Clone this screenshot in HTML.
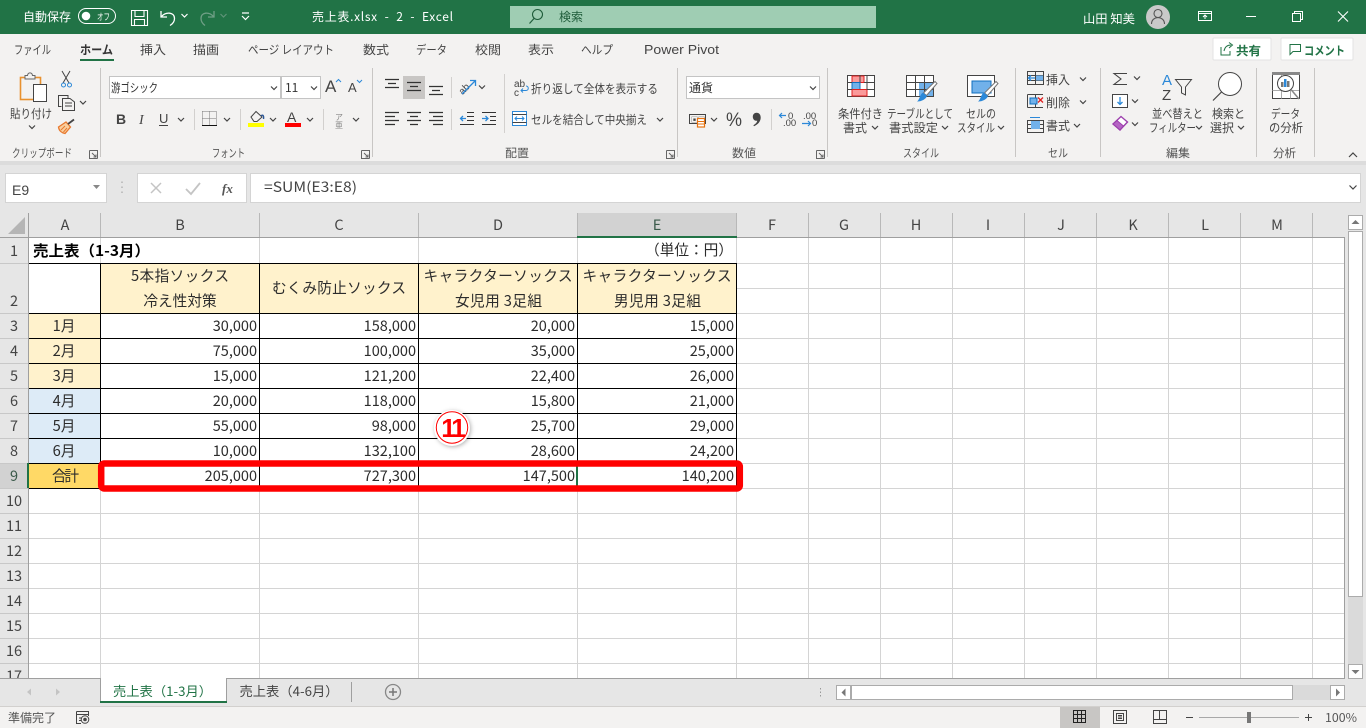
<!DOCTYPE html>
<html lang="ja"><head><meta charset="utf-8"><title>売上表.xlsx - Excel</title>
<style>
html,body{margin:0;padding:0;background:#e6e6e6;overflow:hidden}
svg{display:block;font-family:"Liberation Sans","Noto Sans CJK JP",sans-serif;text-spacing-trim:space-all}
.j{font-family:"Noto Sans CJK JP",sans-serif}
.u{font-family:"Noto Sans CJK JP",sans-serif;font-size:12px;fill:#444}
.w{font-family:"Noto Sans CJK JP",sans-serif;font-size:12px;fill:#fff}
.c{font-family:"Noto Sans CJK JP",sans-serif;font-size:14.67px;fill:#2c2c2c}
.n{font-family:"Noto Sans CJK JP",sans-serif;font-size:14.5px;fill:#2c2c2c;text-anchor:end}
.m{text-anchor:middle}
.h{font-family:"Noto Sans CJK JP",sans-serif;font-size:14.5px;fill:#444;text-anchor:middle}
.s{fill:none;stroke:#444;stroke-width:1}
.l{fill:none;stroke:#333;stroke-width:1.3}
</style></head><body>
<svg width="1366" height="728" viewBox="0 0 1366 728" xmlns="http://www.w3.org/2000/svg">
<defs><path id="ch" d="M-3-1.5L0 1.5 3-1.5" fill="none" stroke="#444" stroke-width="1.2"/>
<path id="launch" d="M.5.5H8.5V8.5M.5.5V8.5H8.5M3 3L7 7M7 4.5V7H4.5" fill="none" stroke="#666" stroke-width="1"/></defs>

<!-- backgrounds -->
<rect width="1366" height="728" fill="#e6e6e6"/>
<rect width="1366" height="34" fill="#217346"/>
<rect y="34" width="1366" height="127" fill="#f3f2f1"/>
<rect y="161" width="1366" height="4" fill="#dcdcdc"/>

<!-- title bar -->
<text class="w" x="23" y="21" textLength="48" lengthAdjust="spacingAndGlyphs">自動保存</text>
<rect x="78.5" y="8.5" width="37" height="15" rx="7.5" fill="none" stroke="#fff"/>
<circle cx="86" cy="16" r="4.3" fill="#fff"/>
<text class="w" x="97" y="20" style="font-size:9px" textLength="13" lengthAdjust="spacingAndGlyphs">オフ</text>
<path d="M131.5 10.5H147.5V25.5H131.5ZM135 10.5V16.5H144V10.5M134.5 25.5V19.5H144.5V25.5" fill="none" stroke="#fff" stroke-width="1.1"/>
<path d="M161 11V17H167M161.5 16.5C166 11.5 174.5 12 174.5 18.5C174.5 21.5 172.5 24 170 25.5" fill="none" stroke="#fff" stroke-width="1.3"/>
<path d="M181.5 14L184.5 17 187.5 14" fill="none" stroke="#fff" stroke-width="1.2"/>
<path d="M214 11V17H208M213.5 16.5C209 11.5 201 12 201 18.5C201 21.5 203 24 205 25.5" fill="none" stroke="#6f9f86" stroke-width="1.3"/>
<path d="M220.5 14L223.5 17 226.5 14" fill="none" stroke="#5f9378" stroke-width="1.2"/>
<path d="M242 13H249M242 16L245.5 19.5 249 16" fill="none" stroke="#fff" stroke-width="1.2"/>
<text class="w" x="312" y="21" textLength="141" lengthAdjust="spacing">売上表.xlsx&#160;&#160;-&#160;&#160;2&#160;&#160;-&#160;&#160;Excel</text>
<rect x="510" y="6" width="366" height="22" fill="#9fcdb3"/>
<circle cx="537.5" cy="14.5" r="5" fill="none" stroke="#1f5c3a" stroke-width="1.1"/>
<path d="M534 18.5L529.5 23.5" stroke="#1f5c3a" stroke-width="1.2"/>
<text class="u" x="559" y="21" style="fill:#1f5c3a" textLength="24" lengthAdjust="spacingAndGlyphs">検索</text>
<text class="w" x="1083" y="23" textLength="52" lengthAdjust="spacingAndGlyphs">山田 知美</text>
<circle cx="1158" cy="17" r="12" fill="#c9c9c9"/>
<circle cx="1158" cy="13.5" r="4" fill="none" stroke="#555" stroke-width="1.1"/>
<path d="M1151.5 24C1151.5 15.5 1164.500 15.500 1164.500 24" fill="none" stroke="#555" stroke-width="1.1"/>
<path d="M1198.500 11.500H1211.500V20.500H1198.500ZM1198.500 13.500H1211.500M1205 19V15M1203 17L1205 15 1207 17" fill="none" stroke="#fff"/>
<path d="M1246 16.500H1256" stroke="#fff" stroke-width="1"/>
<path d="M1292.500 13.500H1300.500V21.500H1292.500ZM1294.500 13V11.500H1302.500V19.500H1301" fill="none" stroke="#fff"/>
<path d="M1338 11.500L1348 21.500M1348 11.500L1338 21.500" stroke="#fff" stroke-width="1.1"/>

<!-- tabs -->
<g class="u">
<text class="u" x="14" y="54" textLength="37" lengthAdjust="spacingAndGlyphs">ファイル</text>
<text class="u" x="80" y="54" textLength="33" lengthAdjust="spacingAndGlyphs" style="font-weight:700;fill:#333">ホーム</text>
<text class="u" x="140" y="54" textLength="26" lengthAdjust="spacingAndGlyphs">挿入</text>
<text class="u" x="193" y="54" textLength="26" lengthAdjust="spacingAndGlyphs">描画</text>
<text class="u" x="248" y="54" textLength="86" lengthAdjust="spacingAndGlyphs">ページ レイアウト</text>
<text class="u" x="363" y="54" textLength="26" lengthAdjust="spacingAndGlyphs">数式</text>
<text class="u" x="416" y="54" textLength="31" lengthAdjust="spacingAndGlyphs">データ</text>
<text class="u" x="475" y="54" textLength="26" lengthAdjust="spacingAndGlyphs">校閲</text>
<text class="u" x="528" y="54" textLength="26" lengthAdjust="spacingAndGlyphs">表示</text>
<text class="u" x="581" y="54" textLength="32" lengthAdjust="spacingAndGlyphs">ヘルプ</text>
<text class="u" x="644" y="54" textLength="75" lengthAdjust="spacingAndGlyphs" style="font-family:'Liberation Sans',sans-serif;font-size:13px">Power Pivot</text>
</g>
<rect x="80" y="59" width="34" height="2" fill="#217346"/>
<rect x="1213" y="38" width="58" height="22" rx="1" fill="#fff" stroke="#e3e3e3"/>
<rect x="1281" y="38" width="72" height="22" rx="1" fill="#fff" stroke="#e3e3e3"/>
<path d="M1221 47V55H1230V51M1224 51C1225 46 1228 45 1231 45M1229 42.500L1232.500 45 1229 48" fill="none" stroke="#217346"/>
<text class="u" x="1236" y="55" style="font-weight:700;fill:#217346" textLength="25" lengthAdjust="spacingAndGlyphs">共有</text>
<path d="M1289.500 44.500H1300.500V51.500H1293L1290 54.500V44.500Z" fill="none" stroke="#217346"/>
<text class="u" x="1304" y="55" style="font-weight:700;fill:#217346" textLength="41" lengthAdjust="spacingAndGlyphs">コメント</text>

<!-- ribbon separators -->
<path d="M100.500 68V157M372.500 68V157M677.500 68V157M827.500 68V157M1015.500 68V157M1100.500 68V157M1256.500 68V157M1314.500 68V157" stroke="#c8c6c4"/>
<path d="M194.500 109V130M240.500 109V130M323.500 109V130M451.500 77V98M451.500 109V130M504.500 74V133M771.500 109V130" stroke="#d2d0ce"/>

<!-- group labels -->
<g>
<text class="u" x="12" y="157" textLength="60" lengthAdjust="spacingAndGlyphs" style="font-size:11.500px;fill:#555">クリップボード</text>
<text class="u" x="212" y="157" textLength="33" lengthAdjust="spacingAndGlyphs" style="font-size:11.500px;fill:#555">フォント</text>
<text class="u" x="505" y="157" textLength="24" lengthAdjust="spacingAndGlyphs" style="font-size:11.500px;fill:#555">配置</text>
<text class="u" x="732" y="157" textLength="24" lengthAdjust="spacingAndGlyphs" style="font-size:11.500px;fill:#555">数値</text>
<text class="u" x="903" y="157" textLength="36" lengthAdjust="spacingAndGlyphs" style="font-size:11.500px;fill:#555">スタイル</text>
<text class="u" x="1048" y="157" textLength="20" lengthAdjust="spacingAndGlyphs" style="font-size:11.500px;fill:#555">セル</text>
<text class="u" x="1166" y="157" textLength="24" lengthAdjust="spacingAndGlyphs" style="font-size:11.500px;fill:#555">編集</text>
<text class="u" x="1273" y="157" textLength="23" lengthAdjust="spacingAndGlyphs" style="font-size:11.500px;fill:#555">分析</text>
</g>
<use href="#launch" x="89" y="150"/><use href="#launch" x="361" y="150"/><use href="#launch" x="666" y="150"/><use href="#launch" x="816" y="150"/>
<path d="M1349 157L1353 153 1357 157" fill="none" stroke="#444" stroke-width="1.2"/>

<!-- clipboard -->
<rect x="20.500" y="77.500" width="20" height="22" fill="none" stroke="#e8912f" stroke-width="1.6"/>
<path d="M25 77.500V75.500H27.500C28 72 32 72 32.500 75.500H35V79H25Z" fill="#f3f2f1" stroke="#666"/>
<rect x="33.500" y="84.500" width="13" height="17" fill="#fff" stroke="#444"/>
<text class="u" x="10" y="118" textLength="42" lengthAdjust="spacingAndGlyphs">貼り付け</text>
<use href="#ch" x="32" y="127"/>
<path d="M62 71L69 83M70 71L63 83" stroke="#444"/>
<circle cx="63.500" cy="85" r="2" fill="none" stroke="#2b88d8"/><circle cx="69.500" cy="85" r="2" fill="none" stroke="#2b88d8"/>
<path d="M61.500 106.500H58.500V95.500H68V98M62.500 98.500H70L74.500 102V110.500H62.500ZM65 103H72M65 106H72" fill="none" stroke="#444"/>
<use href="#ch" x="83" y="102.500"/>
<path d="M58.500 127L66 122 70.500 127 65 133.500C62 133 59 131 58.500 127Z" fill="#f9cf9e" stroke="#e8792f" stroke-width="1.300"/>
<path d="M61 130L65 126M63.500 132L67 128" stroke="#e8792f"/>
<path d="M68 124L74 119.500" stroke="#444" stroke-width="1.800"/>

<!-- font -->
<rect x="109.500" y="76.500" width="171" height="22" fill="#fff" stroke="#c4c4c4"/>
<rect x="281.500" y="76.500" width="39" height="22" fill="#fff" stroke="#c4c4c4"/>
<text class="u" x="111" y="92" textLength="47" lengthAdjust="spacingAndGlyphs" style="fill:#333">游ゴシック</text>
<text class="u" x="285" y="92" style="fill:#333">11</text>
<use href="#ch" x="274" y="88"/><use href="#ch" x="314" y="88"/>
<text x="325" y="92" style="font-size:17px;fill:#444">A</text><path d="M336 82L338.500 79.500 341 82" fill="none" stroke="#2b88d8"/>
<text x="348" y="92" style="font-size:13px;fill:#444">A</text><path d="M357 80L359.500 82.500 362 80" fill="none" stroke="#2b88d8"/>
<text x="116" y="124" style="font-size:14px;font-weight:700;fill:#444">B</text>
<text x="139" y="124" style="font-size:14px;font-style:italic;fill:#444;font-family:'Liberation Serif',serif">I</text>
<text x="159" y="123" style="font-size:13px;fill:#444">U</text><path d="M159 125.500H168" stroke="#444"/>
<use href="#ch" x="181" y="119.500"/>
<path d="M202.500 111.500H216.500V125.500H202.500M202.500 111.500V125.500M209.500 111.500V125.500M202.500 118.500H216.500" fill="none" stroke="#777" stroke-dasharray="1 1"/>
<path d="M202 125.500H217" stroke="#111"/>
<use href="#ch" x="227" y="119.500"/>
<path d="M251 117L256 111.500 262 117 257 121.500H254Z" fill="none" stroke="#444"/><path d="M261 116C263 114 264 116 263.500 119" fill="none" stroke="#2b5797" stroke-width="1.400"/>
<rect x="248" y="123" width="16" height="4" fill="#ffff00"/>
<use href="#ch" x="273" y="119.500"/>
<text x="287" y="122" style="font-size:14px;fill:#444">A</text>
<rect x="285" y="123" width="16" height="4" fill="#f00"/>
<use href="#ch" x="310" y="119.500"/>
<text class="j" x="335" y="120" style="font-size:8px;fill:#888">ア</text><text class="j" x="335" y="128" style="font-size:8px;fill:#888">亜</text>
<use href="#ch" x="356" y="119.500"/>

<!-- alignment -->
<rect x="403" y="76" width="22" height="23" fill="#c8c6c4"/>
<path d="M385 79.500H399M388 83.500H396M385 87.500H399M407 82.500H421M410 86.500H418M407 90.500H421M429 86.500H443M432 90.500H440M429 94.500H443" class="l"/>
<path d="M385 112.500H399M385 116.500H395M385 120.500H399M385 124.500H395M407 112.500H421M410 116.500H418M407 120.500H421M410 124.500H418M429 112.500H443M433 116.500H443M429 120.500H443M433 124.500H443" class="l"/>
<g transform="rotate(-45 466 86)"><text x="457" y="90" style="font-size:10px;fill:#444">ab</text></g>
<path d="M462 94L475 81M470 80.500H475.500V86" fill="none" stroke="#2b88d8" stroke-width="1.300"/>
<use href="#ch" x="482" y="87"/>
<path d="M467 112.500H474M467 116.500H474M467 120.500H474M460 124.500H474M482 112.500H496M490 116.500H496M490 120.500H496M482 124.500H496" class="l" style="stroke-width:1"/>
<path d="M466 118.500H460.500M463 116L460.500 118.500 463 121M482 118.500H488M485.500 116L488 118.500 485.500 121" fill="none" stroke="#2b88d8" stroke-width="1.300"/>
<text x="514" y="87" style="font-size:10px;fill:#444">ab</text><text x="514" y="96" style="font-size:10px;fill:#444">c</text>
<path d="M521 90.500H526C529 90.500 529 86 526 86M523 88.500L521 90.500 523 92.500" fill="none" stroke="#2b88d8"/>
<text class="u" x="531" y="93" textLength="127" lengthAdjust="spacingAndGlyphs">折り返して全体を表示する</text>
<rect x="512.500" y="111.500" width="14" height="14" fill="#fff" stroke="#2b88d8"/><path d="M512.500 114.500H526.500M512.500 122.500H526.500" stroke="#444"/><path d="M515 118.500H524M517 116.500L515 118.500 517 120.500M522 116.500L524 118.500 522 120.500" fill="none" stroke="#2b88d8"/>
<text class="u" x="531" y="124" textLength="116" lengthAdjust="spacingAndGlyphs">セルを結合して中央揃え</text>
<use href="#ch" x="660" y="119.500"/>

<!-- number -->
<rect x="686.500" y="76.500" width="133" height="22" fill="#fff" stroke="#c4c4c4"/>
<text class="u" x="689" y="92" textLength="24" lengthAdjust="spacingAndGlyphs" style="fill:#333">通貨</text>
<use href="#ch" x="813" y="88"/>
<path d="M689.500 114.500H705.500V123.500H689.500Z" fill="none" stroke="#444"/><text x="691" y="122" style="font-size:7px;fill:#444">▣▣</text>
<rect x="697.500" y="118.500" width="7" height="8.500" fill="#fff" stroke="#e8730f" stroke-width="1.200"/><path d="M697.500 121.500H704.500M697.500 124H704.500" stroke="#e8730f"/>
<use href="#ch" x="714" y="119.500"/>
<text x="726" y="126" style="font-size:19px;fill:#444" textLength="16" lengthAdjust="spacingAndGlyphs">%</text>
<path d="M756.500 112.700C759.500 112.700 760.700 115 760.700 117.500C760.700 121.500 758 124.500 754 126.200L753.400 125.200C755.500 124 757 122.500 757.300 120.700C755 121.200 752.800 119.500 752.800 116.700C752.800 114.300 754.500 112.700 756.500 112.700Z" fill="#444"/>
<text x="788" y="119" style="font-size:9.500px;fill:#444">0</text><text x="783" y="126" style="font-size:9.500px;fill:#444">.00</text>
<path d="M786 115.500H779.500M782 113L779.500 115.500 782 118" fill="none" stroke="#2b88d8" stroke-width="1.200"/>
<text x="803" y="119" style="font-size:9.500px;fill:#444">.00</text><text x="812" y="126" style="font-size:9.500px;fill:#444">0</text>
<path d="M802 123.500H810.500M808 121L810.500 123.500 808 126" fill="none" stroke="#2b88d8" stroke-width="1.200"/>

<!-- styles -->
<rect x="847.500" y="75.500" width="27" height="21" fill="#fff" stroke="#444"/>
<rect x="852" y="76" width="12" height="6.500" fill="#fa9a9a" stroke="#e02020"/>
<rect x="852" y="82.500" width="8" height="7" fill="#71b1ea" stroke="#106ebe"/>
<rect x="852" y="89.500" width="15" height="6.500" fill="#fa9a9a" stroke="#e02020"/>
<path d="M847.500 82.500H852M864 82.500H874.500M847.500 89.500H852M867 89.500H874.500M860 75.500V82M867 75.500V82M867 82.500V89.500" stroke="#444"/>
<text class="u" x="838" y="118" textLength="45" lengthAdjust="spacingAndGlyphs">条件付き</text>
<text class="u" x="843" y="132" textLength="24" lengthAdjust="spacingAndGlyphs">書式</text><use href="#ch" x="875" y="127.500"/>
<rect x="906.500" y="75.500" width="27" height="21" fill="#fff" stroke="#444"/><rect x="919" y="82" width="14" height="14" fill="#71b1ea"/>
<path d="M906.500 82.500H933.500M906.500 89.500H933.500M915.500 75.500V96.500M924.500 75.500V96.500" stroke="#444"/>
<path d="M935 81.500L937 83.500 926.500 95.500 923.500 93Z" fill="#fff" stroke="#777"/><path d="M923 92.500L927 96C926 99 922 101.500 917 101.500C920 99.500 919.500 94.500 923 92.500Z" fill="#2b88d8"/>
<text class="u" x="887" y="118" textLength="66" lengthAdjust="spacingAndGlyphs">テーブルとして</text>
<text class="u" x="889" y="132" textLength="49" lengthAdjust="spacingAndGlyphs">書式設定</text><use href="#ch" x="945" y="127.500"/>
<rect x="967.500" y="75.500" width="27" height="21" fill="#fff" stroke="#444"/><rect x="972" y="81" width="19" height="12" fill="#71b1ea" stroke="#106ebe"/>
<path d="M996 81.500L998 83.500 987.500 95.500 984.500 93Z" fill="#fff" stroke="#777"/><path d="M984 92.500L988 96C987 99 983 101.500 978 101.500C981 99.500 980.500 94.500 984 92.500Z" fill="#2b88d8"/>
<text class="u" x="966" y="118" textLength="30" lengthAdjust="spacingAndGlyphs">セルの</text>
<text class="u" x="957" y="132" textLength="38" lengthAdjust="spacingAndGlyphs">スタイル</text><use href="#ch" x="1001" y="127.500"/>

<!-- cells -->
<path d="M1027.500 71.500H1043.500V84.500H1027.500ZM1027.500 75.500H1043.500M1027.500 80.500H1043.500M1035.500 71.500V84.500" fill="none" stroke="#444"/><rect x="1036" y="75.500" width="7" height="5" fill="#71b1ea"/>
<path d="M1035 78H1028.500M1031 75.500L1028.500 78 1031 80.500" fill="none" stroke="#2b88d8" stroke-width="1.300"/>
<text class="u" x="1046" y="84" textLength="24" lengthAdjust="spacingAndGlyphs">挿入</text><use href="#ch" x="1083" y="79"/>
<path d="M1027.500 94.500H1043M1027.500 107.500H1043M1027.500 94.500V107.500M1035.500 94.500V98M1035.500 104V107.500" fill="none" stroke="#444"/><rect x="1030" y="98" width="7" height="6" fill="#71b1ea" stroke="#106ebe"/>
<path d="M1038 97.500L1043 102.500M1043 97.500L1038 102.500" stroke="#e02020" stroke-width="1.300"/>
<text class="u" x="1046" y="107" textLength="24" lengthAdjust="spacingAndGlyphs">削除</text><use href="#ch" x="1083" y="102"/>
<path d="M1027.500 120.500V132.500H1043.500V120.500ZM1027.500 124.500H1043.500M1027.500 128.500H1043.500" fill="none" stroke="#444"/><rect x="1031" y="121" width="9" height="8" fill="#71b1ea"/>
<path d="M1030 117.500H1040" stroke="#2b88d8"/>
<text class="u" x="1046" y="130" textLength="24" lengthAdjust="spacingAndGlyphs">書式</text><use href="#ch" x="1077" y="125.500"/>

<!-- edit -->
<path d="M1127 73.500H1114L1121 79 1114 84.500H1127" fill="none" stroke="#444" stroke-width="1.100"/><use href="#ch" x="1137" y="78"/>
<rect x="1112.500" y="94.500" width="15" height="13" fill="#fff" stroke="#444"/><path d="M1120 97V104M1117.500 102L1120 104.500 1122.500 102" fill="none" stroke="#2b88d8" stroke-width="1.300"/><use href="#ch" x="1135" y="101"/>
<path d="M1113 124L1121 116.500 1127.500 122 1120 130Z" fill="#fff" stroke="#9c3fad" stroke-width="1.400"/><path d="M1113 124L1117 120.500 1123.500 126 1120 130Z" fill="#b565c4" stroke="#9c3fad"/><use href="#ch" x="1135" y="124"/>
<text x="1162" y="85" style="font-size:15px;fill:#2b88d8">A</text><text x="1162" y="100" style="font-size:15px;fill:#444">Z</text>
<path d="M1175.500 79.500H1191.500L1185.500 87V95L1181.500 93V87Z" fill="none" stroke="#444"/>
<text class="u" x="1152" y="118" textLength="51" lengthAdjust="spacingAndGlyphs">並べ替えと</text>
<text class="u" x="1149" y="132" textLength="47" lengthAdjust="spacingAndGlyphs">フィルター</text><use href="#ch" x="1199" y="127.500"/>
<circle cx="1230" cy="84" r="11.500" fill="#fff" stroke="#444"/><path d="M1221.500 92L1213 100.500" stroke="#444" stroke-width="1.200"/>
<text class="u" x="1212" y="118" textLength="33" lengthAdjust="spacingAndGlyphs">検索と</text>
<text class="u" x="1210" y="132" textLength="24" lengthAdjust="spacingAndGlyphs">選択</text><use href="#ch" x="1241" y="127.500"/>

<!-- analysis -->
<rect x="1272.500" y="72.500" width="27" height="26" fill="#fff" stroke="#444"/><rect x="1272" y="72" width="28" height="3" fill="#888"/>
<path d="M1272.500 90.500H1299M1281.500 75V98.500M1290.500 90V98.500" stroke="#aaa"/>
<circle cx="1285.500" cy="83.500" r="8" fill="#fff" stroke="#444"/><path d="M1291 89.500L1299 99" stroke="#888" stroke-width="1.500"/>
<rect x="1281" y="82" width="2.500" height="5" fill="#777"/><rect x="1284" y="79" width="2.500" height="8" fill="#2b88d8"/><rect x="1287" y="81" width="2.500" height="6" fill="#777"/>
<text class="u" x="1271" y="118" textLength="29" lengthAdjust="spacingAndGlyphs">データ</text>
<text class="u" x="1269" y="132" textLength="34" lengthAdjust="spacingAndGlyphs">の分析</text>

<!-- formula bar -->
<rect x="5.500" y="173.500" width="101" height="29" fill="#fff" stroke="#d4d4d4"/>
<text x="12" y="195" style="font-size:14px;fill:#444">E9</text>
<path d="M93 185H100L96.500 189Z" fill="#888"/>
<path d="M122 181.500V183M122 186.500V188M122 191.500V193" stroke="#999"/>
<rect x="137.500" y="173.500" width="109" height="29" fill="#fff" stroke="#d4d4d4"/>
<path d="M151 183L161 193M161 183L151 193" stroke="#c4c4c4" stroke-width="1.500"/>
<path d="M186 189L191 194 200 183" fill="none" stroke="#c4c4c4" stroke-width="1.800"/>
<text x="222" y="193" style="font-size:13px;font-style:italic;font-weight:700;fill:#555;font-family:'Liberation Serif',serif">fx</text>
<rect x="250.500" y="173.500" width="1110" height="29" fill="#fff" stroke="#d4d4d4"/>
<text class="j" x="264" y="192" style="font-size:14px;fill:#444" textLength="93" lengthAdjust="spacingAndGlyphs">=SUM(E3:E8)</text>
<path d="M1349.500 185.500L1353 189 1356.500 185.500" fill="none" stroke="#444" stroke-width="1.200"/>

<!-- sheet area -->
<rect x="29" y="238" width="1315" height="440" fill="#fff"/>
<rect x="100" y="264" width="636" height="49" fill="#fff2cc"/>
<rect x="29" y="314" width="71" height="74" fill="#fff2cc"/>
<rect x="29" y="389" width="71" height="74" fill="#ddebf7"/>
<rect x="29" y="464" width="71" height="24" fill="#ffd966"/>
<rect x="577" y="213" width="160" height="24" fill="#d2d2d2"/>
<rect x="0" y="463" width="28" height="25" fill="#d2d2d2"/>
<path d="M29 263.500H1344M29 288.500H100M737 288.500H1344M29 313.500H1344M29 338.500H1344M29 363.500H1344M29 388.500H1344M29 413.500H1344M29 438.500H1344M29 463.500H1344M29 488.500H1344M29 513.500H1344M29 538.500H1344M29 563.500H1344M29 588.500H1344M29 613.500H1344M29 638.500H1344M29 663.500H1344" stroke="#d4d4d4" shape-rendering="crispEdges"/>
<path d="M100.500 238V678M259.500 238V678M418.500 238V678M577.500 238V678M736.500 238V678M808.500 238V678M880.500 238V678M952.500 238V678M1024.500 238V678M1096.500 238V678M1168.500 238V678M1240.500 238V678M1312.500 238V678" stroke="#d4d4d4" shape-rendering="crispEdges"/>
<!-- headers -->
<path d="M100.500 213V237M259.500 213V237M418.500 213V237M577.500 213V237M736.500 213V237M808.500 213V237M880.500 213V237M952.500 213V237M1024.500 213V237M1096.500 213V237M1168.500 213V237M1240.500 213V237M1312.500 213V237" stroke="#b8b8b8"/>
<path d="M0 263.500H28M0 313.500H28M0 338.500H28M0 363.500H28M0 388.500H28M0 413.500H28M0 438.500H28M0 463.500H28M0 488.500H28M0 513.500H28M0 538.500H28M0 563.500H28M0 588.500H28M0 613.500H28M0 638.500H28M0 663.500H28" stroke="#c8c8c8"/>
<text class="h" x="65" y="230">A</text><text class="h" x="180" y="230">B</text><text class="h" x="339" y="230">C</text><text class="h" x="498" y="230">D</text><text class="h" x="657" y="230" style="fill:#3a5a4a">E</text><text class="h" x="772" y="230">F</text><text class="h" x="844" y="230">G</text><text class="h" x="916" y="230">H</text><text class="h" x="988" y="230">I</text><text class="h" x="1061" y="230">J</text><text class="h" x="1133" y="230">K</text><text class="h" x="1205" y="230">L</text><text class="h" x="1277" y="230">M</text>
<text class="h" x="14" y="256">1</text><text class="h" x="14" y="306">2</text><text class="h" x="14" y="331">3</text><text class="h" x="14" y="356">4</text><text class="h" x="14" y="381">5</text><text class="h" x="14" y="406">6</text><text class="h" x="14" y="431">7</text><text class="h" x="14" y="456">8</text><text class="h" x="14" y="481" style="fill:#3a5a4a">9</text><text class="h" x="14" y="506">10</text><text class="h" x="14" y="531">11</text><text class="h" x="14" y="556">12</text><text class="h" x="14" y="581">13</text><text class="h" x="14" y="606">14</text><text class="h" x="14" y="631">15</text><text class="h" x="14" y="656">16</text><text class="h" x="14" y="681">17</text>
<rect x="0" y="678" width="1345" height="28" fill="#e6e6e6"/>
<path d="M0 237.500H1344.500M28.500 213V678M1344.500 237V678M0 678.500H1345" stroke="#9f9f9f" fill="none"/>
<path d="M8 234H25V217Z" fill="#b5b5b5"/>
<rect x="577" y="236" width="160" height="2" fill="#217346"/>
<rect x="27" y="463" width="2" height="25" fill="#217346"/>

<!-- black borders -->
<path d="M29 263.500H737M29 313.500H737M29 338.500H737M29 363.500H737M29 388.500H737M29 413.500H737M29 438.500H737M29 463.500H737M29 488.500H737M100.500 263V489M259.500 263V489M418.500 263V489M577.500 263V489M736.500 263V489" stroke="#000" shape-rendering="crispEdges"/>
<rect x="29" y="264" width="71" height="49" fill="#fff"/>

<!-- cells text -->
<text class="c" x="33" y="256" style="font-weight:700;fill:#000" textLength="117" lengthAdjust="spacingAndGlyphs">売上表（1-3月）</text>
<text class="c" x="733" y="255" text-anchor="end">（単位：円）</text>
<text class="c m" x="180" y="281" textLength="98">5本指ソックス</text><text class="c m" x="180" y="306">冷え性対策</text>
<text class="c m" x="339" y="293" textLength="134">むくみ防止ソックス</text>
<text class="c m" x="498" y="281" textLength="149">キャラクターソックス</text><text class="c m" x="498.500" y="306" textLength="87">女児用 3足組</text>
<text class="c m" x="657" y="281" textLength="149">キャラクターソックス</text><text class="c m" x="657.500" y="306" textLength="87">男児用 3足組</text>
<text class="c m" x="64" y="331">1月</text><text class="c m" x="64" y="356">2月</text><text class="c m" x="64" y="381">3月</text><text class="c m" x="64" y="406">4月</text><text class="c m" x="64" y="431">5月</text><text class="c m" x="64" y="456">6月</text>
<text class="n" x="257" y="331">30,000</text><text class="n" x="416" y="331">158,000</text><text class="n" x="575" y="331">20,000</text><text class="n" x="734" y="331">15,000</text>
<text class="n" x="257" y="356">75,000</text><text class="n" x="416" y="356">100,000</text><text class="n" x="575" y="356">35,000</text><text class="n" x="734" y="356">25,000</text>
<text class="n" x="257" y="381">15,000</text><text class="n" x="416" y="381">121,200</text><text class="n" x="575" y="381">22,400</text><text class="n" x="734" y="381">26,000</text>
<text class="n" x="257" y="406">20,000</text><text class="n" x="416" y="406">118,000</text><text class="n" x="575" y="406">15,800</text><text class="n" x="734" y="406">21,000</text>
<text class="n" x="257" y="431">55,000</text><text class="n" x="416" y="431">98,000</text><text class="n" x="575" y="431">25,700</text><text class="n" x="734" y="431">29,000</text>
<text class="n" x="257" y="456">10,000</text><text class="n" x="416" y="456">132,100</text><text class="n" x="575" y="456">28,600</text><text class="n" x="734" y="456">24,200</text>
<rect x="576" y="464" width="2" height="24" fill="#217346"/>
<text class="n" x="257" y="481">205,000</text><text class="n" x="416" y="481">727,300</text><text class="n" x="575" y="481">147,500</text><text class="n" x="734" y="481">140,200</text>
<text class="c" x="52" y="481" textLength="27">合計</text>
<rect x="101.200" y="463.500" width="638.600" height="25" rx="3" fill="none" stroke="#f00" stroke-width="6.500"/>

<!-- circled number -->
<circle cx="452" cy="428" r="18" fill="#fff" style="filter:drop-shadow(1px 1px 2px rgba(0,0,0,.3))"/>
<circle cx="452" cy="427.500" r="15.700" fill="#fff" stroke="#f00" stroke-width="1"/>
<text x="452" y="437" text-anchor="middle" style="font-size:26px;font-weight:700;fill:#f00;letter-spacing:-3px">11</text>

<!-- vertical scrollbar -->
<rect x="1348" y="231" width="15" height="433" fill="#dadada"/>
<rect x="1348.500" y="215.500" width="14" height="14" fill="#fff" stroke="#ababab"/>
<path d="M1351.500 224H1359.500L1355.500 220Z" fill="#777"/>
<rect x="1348.500" y="231.500" width="14" height="365" fill="#fff" stroke="#ababab"/>
<rect x="1348.500" y="664.500" width="14" height="14" fill="#fff" stroke="#ababab"/>
<path d="M1351.500 670H1359.500L1355.500 674Z" fill="#777"/>

<!-- tabs -->
<rect x="100" y="678" width="126" height="25" fill="#fff"/>
<rect x="100" y="701" width="127" height="2" fill="#217346"/>
<path d="M100.500 678V701M226.500 678V701" stroke="#9f9f9f"/>
<text class="u" x="113" y="696" style="font-size:13px;fill:#217346" textLength="99" lengthAdjust="spacingAndGlyphs">売上表（1-3月）</text>
<text class="u" x="239.500" y="696" style="font-size:13px;fill:#444" textLength="99" lengthAdjust="spacingAndGlyphs">売上表（4-6月）</text>
<path d="M351.500 682V702" stroke="#9f9f9f"/>
<circle cx="393" cy="692" r="7.500" fill="none" stroke="#888" stroke-width="1.300"/><path d="M389 692H397M393 688V696" stroke="#777" stroke-width="1.500"/>
<path d="M31 688.500V695.500L27 692Z" fill="#c4c4c4"/><path d="M56 688.500V695.500L60 692Z" fill="#c4c4c4"/>
<path d="M820.500 688V689.500M820.500 691.500V693M820.500 695V696.500" stroke="#999"/>

<!-- horizontal scrollbar -->
<rect x="836" y="685" width="509" height="15" fill="#dadada"/>
<rect x="836.500" y="685.500" width="14" height="14" fill="#fff" stroke="#ababab"/>
<path d="M845.500 688.500V696.500L841.500 692.500Z" fill="#777"/>
<rect x="851.500" y="685.500" width="441" height="14" fill="#fff" stroke="#ababab"/>
<rect x="1330.500" y="685.500" width="14" height="14" fill="#fff" stroke="#ababab"/>
<path d="M1336 688.500V696.500L1340 692.500Z" fill="#777"/>

<!-- status bar -->
<rect y="706" width="1366" height="22" fill="#f3f2f1"/>
<path d="M0 706.500H1366" stroke="#d2d0ce"/>
<text class="u" x="8" y="722" textLength="48" lengthAdjust="spacingAndGlyphs" style="fill:#555">準備完了</text>
<path d="M76.500 711.500H88.500V716M76.500 711.500V723.500H81M76.500 714.500H88M79 718H82M79 720.500H81" fill="none" stroke="#444"/>
<circle cx="85" cy="719.500" r="3.800" fill="none" stroke="#444"/><circle cx="85" cy="719.500" r="1.800" fill="#444"/>
<rect x="1060" y="707" width="40" height="21" fill="#c8c6c4"/>
<path d="M1073.500 710.500H1085.500V722.500H1073.500ZM1077.500 710.500V722.500M1081.500 710.500V722.500M1073.500 714.500H1085.500M1073.500 718.500H1085.500" fill="none" stroke="#222"/>
<path d="M1113.500 710.500H1126.500V723.500H1113.500ZM1116.500 713.500H1123.500V720.500H1116.500ZM1118 715.500H1122M1118 717H1122M1118 718.500H1122" fill="none" stroke="#444"/>
<path d="M1153.500 710.500H1166.500V723.500H1153.500ZM1153.500 719.500H1166.500V710.500M1159.500 710.500V719.500" fill="none" stroke="#444"/>
<path d="M1186 717.500H1193M1305 717.500H1312M1308.500 714V721" stroke="#444"/>
<path d="M1199 717.500H1299" stroke="#a8a8a8"/>
<rect x="1247" y="712" width="4" height="11" fill="#777"/>
<text class="u" x="1325" y="722" textLength="32" lengthAdjust="spacingAndGlyphs" style="fill:#555">100%</text>
</svg>
</body></html>
